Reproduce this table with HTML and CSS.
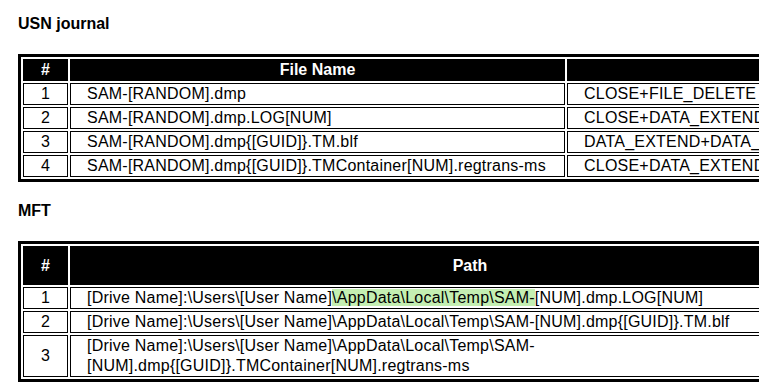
FILE: index.html
```html
<!DOCTYPE html>
<html lang="en">
<head>
    <meta charset="UTF-8">
    <title>SAM dump artifacts</title>
    <link rel="stylesheet" href="styles.css">
</head>
<body>
    <h4 class="section-title">USN journal</h4>
    <table class="artifacts usn">
        <thead>
            <tr>
                <th class="col-num">#</th>
                <th class="col-file">File Name</th>
                <th class="col-reason">Update Reasons</th>
            </tr>
        </thead>
        <tbody>
            <tr>
                <td class="col-num">1</td>
                <td>SAM-[RANDOM].dmp</td>
                <td>CLOSE+FILE_DELETE</td>
            </tr>
            <tr>
                <td class="col-num">2</td>
                <td>SAM-[RANDOM].dmp.LOG[NUM]</td>
                <td>CLOSE+DATA_EXTEND+FILE_CREATE</td>
            </tr>
            <tr>
                <td class="col-num">3</td>
                <td>SAM-[RANDOM].dmp{[GUID]}.TM.blf</td>
                <td>DATA_EXTEND+DATA_OVERWRITE</td>
            </tr>
            <tr>
                <td class="col-num">4</td>
                <td>SAM-[RANDOM].dmp{[GUID]}.TMContainer[NUM].regtrans-ms</td>
                <td>CLOSE+DATA_EXTEND+FILE_CREATE</td>
            </tr>
        </tbody>
    </table>

    <h4 class="section-title">MFT</h4>
    <table class="artifacts mft">
        <thead>
            <tr>
                <th class="col-num">#</th>
                <th class="col-path">Path</th>
            </tr>
        </thead>
        <tbody>
            <tr>
                <td class="col-num">1</td>
                <td>[Drive Name]:\Users\[User Name]<span class="mark">\AppData\Local\Temp\SAM-</span>[NUM].dmp.LOG[NUM]</td>
            </tr>
            <tr>
                <td class="col-num">2</td>
                <td>[Drive Name]:\Users\[User Name]\AppData\Local\Temp\SAM-[NUM].dmp{[GUID]}.TM.blf</td>
            </tr>
            <tr>
                <td class="col-num">3</td>
                <td>[Drive Name]:\Users\[User Name]\AppData\Local\Temp\SAM-[NUM].dmp{[GUID]}.TMContainer[NUM].regtrans-ms</td>
            </tr>
        </tbody>
    </table>
</body>
</html>
```

FILE: styles.css
```css
html {
    overflow: hidden;
}

body {
    margin: 0;
    padding: 15px 0 0 18px;
    background: #fff;
    color: #000;
    font-family: 'Liberation Sans', Arial, sans-serif;
    font-size: 16px;
}

.section-title {
    margin: 0;
    font-size: 16px;
    line-height: 18px;
    font-weight: bold;
}

.artifacts {
    margin: 21px 0 20px;
    border: 3px solid #000;
    border-spacing: 2px;
    table-layout: fixed;
}

.artifacts th,
.artifacts td {
    box-sizing: border-box;
    border: 1px solid #000;
    padding: 0 16px;
    line-height: 20px;
    text-align: left;
    white-space: normal;
}

.artifacts td {
    letter-spacing: 0.22px;
}

.artifacts th {
    background: #000;
    color: #fff;
    text-align: center;
    font-weight: bold;
}

.artifacts .col-num {
    width: 45px;
    padding: 0;
    text-align: center;
}

.usn {
    width: 1112px;
}

.col-file {
    width: 495px;
}

.col-reason {
    width: 560px;
}

.mft {
    width: 857px;
}

.mft th {
    height: 39px;
}

.col-path {
    width: 800px;
}

.mark {
    background: #c4efb2;
}
```
